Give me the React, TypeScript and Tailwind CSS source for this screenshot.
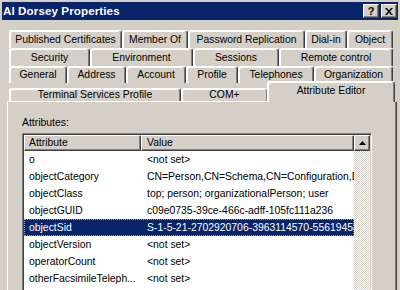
import React from "react";

const tabBase =
  "flex items-center justify-center rounded-t-[3px] border-l border-t border-white border-r border-r-[#404040] shadow-[inset_-1px_0_#808080,inset_1px_1px_#ffffff] bg-[#d4d0c8] text-black whitespace-nowrap";

function Tab({ label, w }: { label: string; w: number }) {
  return (
    <div className={tabBase} style={{ width: w }}>
      {label}
    </div>
  );
}

const rows: { a: string; v: string; sel?: boolean }[] = [
  { a: "o", v: "<not set>" },
  { a: "objectCategory", v: "CN=Person,CN=Schema,CN=Configuration,DC=contoso,DC=com" },
  { a: "objectClass", v: "top; person; organizationalPerson; user" },
  { a: "objectGUID", v: "c09e0735-39ce-466c-adff-105fc111a236" },
  { a: "objectSid", v: "S-1-5-21-2702920706-3963114570-556194587-1108", sel: true },
  { a: "objectVersion", v: "<not set>" },
  { a: "operatorCount", v: "<not set>" },
  { a: "otherFacsimileTeleph...", v: "<not set>" },
  { a: "otherHomePhone", v: "<not set>" },
];

export default function App() {
  return (
    <div
      className="w-[400px] h-[290px] overflow-hidden bg-[#d4d0c8] text-[10.4px] leading-[12px] text-black"
      style={{ fontFamily: '"Liberation Sans", Arial, sans-serif' }}
    >
      {/* title bar */}
      <div className="px-[2px] pt-[2px]">
        <div className="h-[18px] bg-[#0a246a] flex items-center justify-between pl-[1px] pr-[1px]">
          <span className="text-white font-bold text-[11.6px] leading-[14px] tracking-[0.1px]">
            Al Dorsey Properties
          </span>
          <div className="flex gap-[2px] items-center">
            <div className="w-[16px] h-[14px] bg-[#d4d0c8] border-t border-l border-white border-r border-b border-r-[#404040] border-b-[#404040] shadow-[inset_-1px_-1px_#808080] flex items-center justify-center font-bold text-[11px] leading-none">
              ?
            </div>
            <div className="w-[16px] h-[14px] bg-[#d4d0c8] border-t border-l border-white border-r border-b border-r-[#404040] border-b-[#404040] shadow-[inset_-1px_-1px_#808080] flex items-center justify-center">
              <svg width="8" height="7" viewBox="0 0 8 7">
                <path d="M0 0h2l2 2.5L6 0h2L5 3.5 8 7H6L4 4.5 2 7H0l3-3.5z" fill="#000" />
              </svg>
            </div>
          </div>
        </div>
      </div>

      {/* tabs */}
      <div className="pl-[9px] pt-[10px] flex flex-col">
        <div className="flex h-[18px]">
          <Tab label="Published Certificates" w={113} />
          <Tab label="Member Of" w={66} />
          <Tab label="Password Replication" w={117} />
          <Tab label="Dial-in" w={42} />
          <Tab label="Object" w={46} />
        </div>
        <div className="flex h-[18px]">
          <Tab label="Security" w={81} />
          <Tab label="Environment" w={103} />
          <Tab label="Sessions" w={86} />
          <Tab label="Remote control" w={114} />
        </div>
        <div className="flex h-[17px]">
          <Tab label="General" w={58} />
          <Tab label="Address" w={59} />
          <Tab label="Account" w={60} />
          <Tab label="Profile" w={52} />
          <Tab label="Telephones" w={76} />
          <Tab label="Organization" w={79} />
        </div>
        <div className="flex h-[18px] items-end">
          <Tab label="Terminal Services Profile" w={172} />
          <Tab label="COM+" w={87} />
          <div
            className="relative z-10 -mb-px ml-[-1px] h-[21px] pb-[2px] w-[128px] flex items-center justify-center rounded-t-[3px] border-l border-t border-white border-r border-r-[#404040] shadow-[inset_-1px_0_#808080,inset_1px_1px_#ffffff] bg-[#d4d0c8] whitespace-nowrap"
          >
            Attribute Editor
          </div>
        </div>
      </div>

      {/* panel */}
      <div className="ml-[7px] w-[390px] h-[200px] border-l border-t border-white border-r border-r-[#404040] shadow-[inset_-1px_0_#808080] pl-[14px] pt-[15px]">
        <div className="h-[12px]">Attributes:</div>
        <div className="mt-[4px] w-[350px] h-[170px] border-t border-l border-[#808080] border-r border-b border-r-white border-b-white shadow-[inset_1px_1px_#404040] pl-px pt-px flex">
          <div className="w-[330px] bg-white flex flex-col">
            <div className="flex h-[16px] shrink-0">
              <div className="w-[117px] bg-[#d4d0c8] border-t border-l border-white border-r border-b border-r-[#404040] border-b-[#404040] shadow-[inset_-1px_-1px_#808080] pl-[4px] flex items-center">
                Attribute
              </div>
              <div className="flex-1 bg-[#d4d0c8] border-t border-l border-white border-r border-b border-r-[#404040] border-b-[#404040] shadow-[inset_-1px_-1px_#808080] pl-[5px] flex items-center">
                Value
              </div>
            </div>
            {rows.map((r) => (
              <div
                key={r.a}
                className={
                  "flex h-[17px] shrink-0 items-center whitespace-nowrap overflow-hidden " +
                  (r.sel
                    ? "bg-[#0a246a] text-white outline-1 outline-dotted outline-offset-[-1px] outline-[#9aa4c4]"
                    : "")
                }
              >
                <div className="w-[117px] pl-[5px] overflow-hidden">{r.a}</div>
                <div className="flex-1 pl-[6px] overflow-hidden">{r.v}</div>
              </div>
            ))}
          </div>
          <div className="w-[16px] flex flex-col bg-[repeating-conic-gradient(#d4d0c8_0%_25%,#ffffff_0%_50%)] bg-[length:2px_2px]">
            <div className="h-[16px] bg-[#d4d0c8] border-t border-l border-white border-r border-b border-r-[#404040] border-b-[#404040] shadow-[inset_-1px_-1px_#808080] flex items-center justify-center">
              <svg width="7" height="4" viewBox="0 0 7 4">
                <path d="M3.5 0L7 4H0z" fill="#000" />
              </svg>
            </div>
          </div>
        </div>
      </div>
    </div>
  );
}
